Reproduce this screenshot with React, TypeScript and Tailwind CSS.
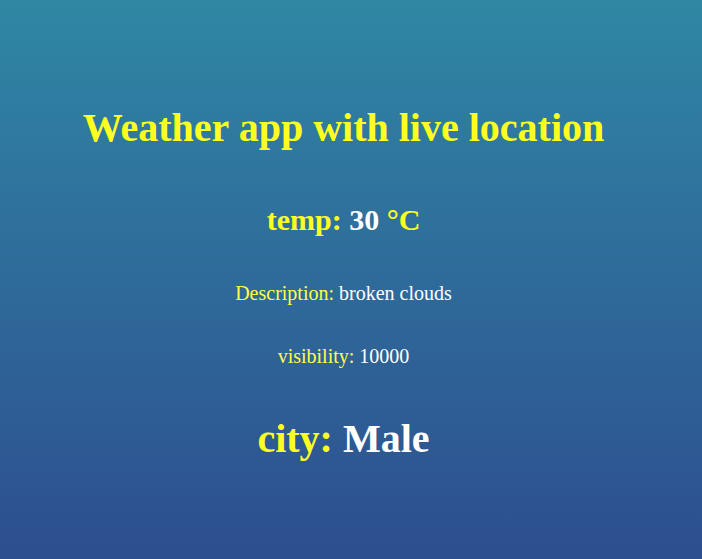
export default function App() {
	const weather = {
		temp: 30,
		description: "broken clouds",
		visibility: 10000,
		city: "Male",
	};

	return (
		<main className="flex h-[559px] w-full flex-col items-center bg-gradient-to-b from-[#2f87a4] to-[#2d4e8f] pr-[15px] text-center font-['Liberation_Serif',serif]">
			<h1 className="mt-[104px] text-[40px] font-bold leading-[48px] text-[#ffff1f]">
				Weather app with live location
			</h1>
			<h2 className="mt-[48px] text-[30px] font-bold leading-[40px] text-[#ffff1f]">
				temp: <span className="text-white">{weather.temp}</span> °C
			</h2>
			<p className="mt-[41px] text-[20px] leading-[24px] text-[#ffff4a]">
				Description: <span className="text-white">{weather.description}</span>
			</p>
			<p className="mt-[39px] text-[20px] leading-[24px] text-[#ffff4a]">
				visibility: <span className="text-white">{weather.visibility}</span>
			</p>
			<h2 className="mt-[47px] text-[40px] font-bold leading-[48px] text-[#ffff1f]">
				city: <span className="text-white">{weather.city}</span>
			</h2>
		</main>
	);
}
